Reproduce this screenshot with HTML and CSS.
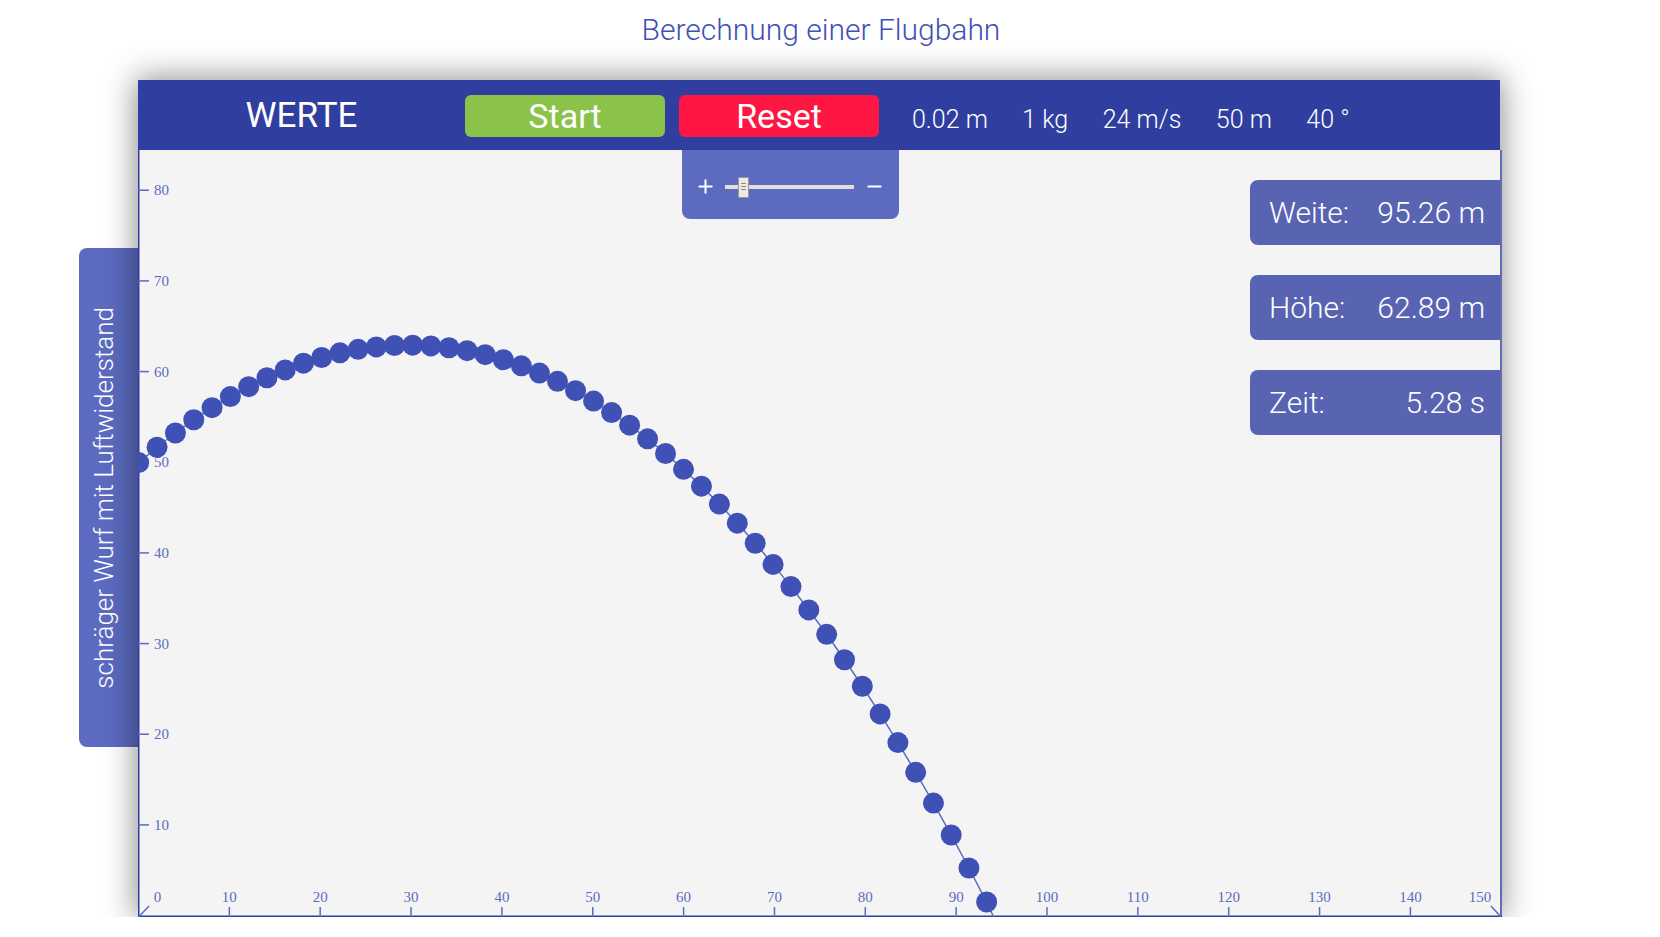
FILE: index.html
```html
<!DOCTYPE html>
<html lang="de">
<head>
<meta charset="utf-8">
<title>Berechnung einer Flugbahn</title>
<link rel="stylesheet" href="styles.css">
</head>
<body>
<div class="page">
  <h1 class="title">Berechnung einer Flugbahn</h1>

  <div class="side-tab"><span class="side-tab-label">schräger Wurf mit Luftwiderstand</span></div>

  <section class="panel">
    <header class="toolbar">
      <div class="brand">WERTE</div>
      <button class="btn btn-start" type="button">Start</button>
      <button class="btn btn-reset" type="button">Reset</button>
      <ul class="values">
        <li>0.02 m</li>
        <li>1 kg</li>
        <li>24 m/s</li>
        <li>50 m</li>
        <li>40 °</li>
      </ul>
    </header>

    <div class="chart">
      <svg class="plot" width="1364" height="767" viewBox="0 0 1364 767" xmlns="http://www.w3.org/2000/svg">
        <g class="frame">
          <line x1="0.75" y1="0" x2="0.75" y2="767"/>
          <line x1="1363" y1="0" x2="1363" y2="767"/>
          <line x1="0" y1="766.25" x2="1364" y2="766.25"/>
        </g>
        <g class="ticks">
          <line x1="0.5" y1="767" x2="11" y2="756"/>
          <line x1="91.35" y1="757" x2="91.35" y2="767"/>
          <line x1="182.2" y1="757" x2="182.2" y2="767"/>
          <line x1="273.05" y1="757" x2="273.05" y2="767"/>
          <line x1="363.9" y1="757" x2="363.9" y2="767"/>
          <line x1="454.75" y1="757" x2="454.75" y2="767"/>
          <line x1="545.6" y1="757" x2="545.6" y2="767"/>
          <line x1="636.45" y1="757" x2="636.45" y2="767"/>
          <line x1="727.3" y1="757" x2="727.3" y2="767"/>
          <line x1="818.15" y1="757" x2="818.15" y2="767"/>
          <line x1="909" y1="757" x2="909" y2="767"/>
          <line x1="999.85" y1="757" x2="999.85" y2="767"/>
          <line x1="1090.7" y1="757" x2="1090.7" y2="767"/>
          <line x1="1181.55" y1="757" x2="1181.55" y2="767"/>
          <line x1="1272.4" y1="757" x2="1272.4" y2="767"/>
          <line x1="1353" y1="756" x2="1363" y2="767"/>

          <line x1="0" y1="674.93" x2="11" y2="674.93"/>
          <line x1="0" y1="584.26" x2="11" y2="584.26"/>
          <line x1="0" y1="493.59" x2="11" y2="493.59"/>
          <line x1="0" y1="402.92" x2="11" y2="402.92"/>
          <line x1="0" y1="312.25" x2="11" y2="312.25"/>
          <line x1="0" y1="221.58" x2="11" y2="221.58"/>
          <line x1="0" y1="130.91" x2="11" y2="130.91"/>
          <line x1="0" y1="40.24" x2="11" y2="40.24"/>
        </g>
        <g class="xlabels">
          <text x="19.5" y="752">0</text>
          <text x="91.35" y="752">10</text>
          <text x="182.2" y="752">20</text>
          <text x="273.05" y="752">30</text>
          <text x="363.9" y="752">40</text>
          <text x="454.75" y="752">50</text>
          <text x="545.6" y="752">60</text>
          <text x="636.45" y="752">70</text>
          <text x="727.3" y="752">80</text>
          <text x="818.15" y="752">90</text>
          <text x="909" y="752">100</text>
          <text x="999.85" y="752">110</text>
          <text x="1090.7" y="752">120</text>
          <text x="1181.55" y="752">130</text>
          <text x="1272.4" y="752">140</text>
          <text x="1342" y="752">150</text>
        </g>
        <g class="ylabels">
          <text x="16" y="680">10</text>
          <text x="16" y="589.3">20</text>
          <text x="16" y="498.6">30</text>
          <text x="16" y="407.9">40</text>
          <text x="16" y="317.3">50</text>
          <text x="16" y="226.6">60</text>
          <text x="16" y="135.9">70</text>
          <text x="16" y="45.2">80</text>
        </g>
        <polyline class="path" points="0.7,312.6 19.06,297.26 37.41,282.99 55.75,269.79 74.07,257.67 92.38,246.62 110.67,236.64 128.95,227.74 147.21,219.92 165.46,213.16 183.7,207.48 201.92,202.87 220.13,199.34 238.33,196.88 256.51,195.49 274.68,195.18 292.83,195.94 310.97,197.78 329.1,200.68 347.21,204.66 365.3,209.72 383.39,215.85 401.46,223.05 419.51,231.33 437.55,240.68 455.58,251.1 473.6,262.6 491.59,275.17 509.58,288.81 527.55,303.53 545.51,319.32 563.45,336.18 581.38,354.12 599.3,373.14 617.2,393.22 635.09,414.38 652.96,436.61 670.82,459.92 688.67,484.3 706.5,509.75 724.32,536.28 742.12,563.88 759.91,592.56 777.69,622.3 795.45,653.12 813.2,685.02 830.93,717.99 848.65,752.03 855.6,767"/>
        <g class="dots">
          <circle cx="0.7" cy="312.6" r="10.5"/>
          <circle cx="19.06" cy="297.26" r="10.5"/>
          <circle cx="37.41" cy="282.99" r="10.5"/>
          <circle cx="55.75" cy="269.79" r="10.5"/>
          <circle cx="74.07" cy="257.67" r="10.5"/>
          <circle cx="92.38" cy="246.62" r="10.5"/>
          <circle cx="110.67" cy="236.64" r="10.5"/>
          <circle cx="128.95" cy="227.74" r="10.5"/>
          <circle cx="147.21" cy="219.92" r="10.5"/>
          <circle cx="165.46" cy="213.16" r="10.5"/>
          <circle cx="183.7" cy="207.48" r="10.5"/>
          <circle cx="201.92" cy="202.87" r="10.5"/>
          <circle cx="220.13" cy="199.34" r="10.5"/>
          <circle cx="238.33" cy="196.88" r="10.5"/>
          <circle cx="256.51" cy="195.49" r="10.5"/>
          <circle cx="274.68" cy="195.18" r="10.5"/>
          <circle cx="292.83" cy="195.94" r="10.5"/>
          <circle cx="310.97" cy="197.78" r="10.5"/>
          <circle cx="329.1" cy="200.68" r="10.5"/>
          <circle cx="347.21" cy="204.66" r="10.5"/>
          <circle cx="365.3" cy="209.72" r="10.5"/>
          <circle cx="383.39" cy="215.85" r="10.5"/>
          <circle cx="401.46" cy="223.05" r="10.5"/>
          <circle cx="419.51" cy="231.33" r="10.5"/>
          <circle cx="437.55" cy="240.68" r="10.5"/>
          <circle cx="455.58" cy="251.1" r="10.5"/>
          <circle cx="473.6" cy="262.6" r="10.5"/>
          <circle cx="491.59" cy="275.17" r="10.5"/>
          <circle cx="509.58" cy="288.81" r="10.5"/>
          <circle cx="527.55" cy="303.53" r="10.5"/>
          <circle cx="545.51" cy="319.32" r="10.5"/>
          <circle cx="563.45" cy="336.18" r="10.5"/>
          <circle cx="581.38" cy="354.12" r="10.5"/>
          <circle cx="599.3" cy="373.14" r="10.5"/>
          <circle cx="617.2" cy="393.22" r="10.5"/>
          <circle cx="635.09" cy="414.38" r="10.5"/>
          <circle cx="652.96" cy="436.61" r="10.5"/>
          <circle cx="670.82" cy="459.92" r="10.5"/>
          <circle cx="688.67" cy="484.3" r="10.5"/>
          <circle cx="706.5" cy="509.75" r="10.5"/>
          <circle cx="724.32" cy="536.28" r="10.5"/>
          <circle cx="742.12" cy="563.88" r="10.5"/>
          <circle cx="759.91" cy="592.56" r="10.5"/>
          <circle cx="777.69" cy="622.3" r="10.5"/>
          <circle cx="795.45" cy="653.12" r="10.5"/>
          <circle cx="813.2" cy="685.02" r="10.5"/>
          <circle cx="830.93" cy="717.99" r="10.5"/>
          <circle cx="848.65" cy="752.03" r="10.5"/>
        </g>
      </svg>

      <div class="zoom-box">
        <svg class="zoom-icon" width="15" height="15" viewBox="0 0 15 15"><path d="M7.5 0.5v14M0.5 7.5h14"/></svg>
        <div class="track"><span class="thumb"></span></div>
        <svg class="zoom-icon" width="15" height="15" viewBox="0 0 15 15"><path d="M0.5 7.5h14"/></svg>
      </div>

      <div class="results">
        <div class="result"><span>Weite:</span><span>95.26 m</span></div>
        <div class="result"><span>Höhe:</span><span>62.89 m</span></div>
        <div class="result"><span>Zeit:</span><span>5.28 s</span></div>
      </div>
    </div>
  </section>
</div>
</body>
</html>
```

FILE: styles.css
```css
* { box-sizing: border-box; }

html, body {
  margin: 0;
  padding: 0;
  background: #ffffff;
  overflow: hidden;
}

body {
  font-family: Roboto, "Noto Sans", "Liberation Sans", sans-serif;
}

.page {
  display: grid;
  grid-template-columns: 59px 1362px;
  grid-template-rows: 80px 837px;
  margin-left: 79px;
}

.title {
  grid-column: 2;
  grid-row: 1;
  margin: 0;
  padding: 12px 0 0 4px;
  text-align: center;
  font-size: 30px;
  line-height: 36px;
  font-weight: 300;
  color: #3f51b5;
}

.side-tab {
  grid-column: 1;
  grid-row: 2;
  align-self: start;
  margin-top: 168px;
  height: 499px;
  padding-right: 9px;
  background: #5c6bc0;
  border-radius: 8px 0 0 8px;
  display: flex;
  align-items: center;
  justify-content: center;
}

.side-tab-label {
  writing-mode: vertical-rl;
  transform: rotate(180deg);
  color: #ffffff;
  font-size: 26px;
  font-weight: 300;
  white-space: nowrap;
}

.panel {
  grid-column: 2;
  grid-row: 2;
  display: flex;
  flex-direction: column;
  box-shadow: 0 0 30px 2px rgba(0, 0, 0, 0.45);
}

.toolbar {
  height: 70px;
  flex: none;
  background: #303f9f;
  display: flex;
  align-items: center;
}

.brand {
  width: 327px;
  text-align: center;
  color: #ffffff;
  font-size: 35px;
  font-weight: 400;
}

.btn {
  width: 200px;
  height: 42px;
  margin-top: 2px;
  padding: 0;
  border: 0;
  border-radius: 6px;
  color: #ffffff;
  font-family: Roboto, "Noto Sans", sans-serif;
  font-size: 34px;
  font-weight: 400;
  line-height: 42px;
}

.btn-start { background: #8bc34a; }

.btn-reset {
  background: #ff1744;
  margin-left: 14px;
}

.values {
  display: flex;
  gap: 34.5px;
  list-style: none;
  margin: 0 0 0 33px;
  padding: 8px 0 0 0;
  color: #ffffff;
  font-size: 25px;
  font-weight: 300;
}

.chart {
  position: relative;
  flex: 1;
  width: 1364px;
  background: #f4f4f4;
  overflow: hidden;
}

.plot {
  display: block;
}

.frame line {
  stroke: #303f9f;
  stroke-width: 1.5;
}

.ticks line {
  stroke: #5c6bc0;
  stroke-width: 1.5;
}

.xlabels text,
.ylabels text {
  font-family: "Liberation Serif", "Times New Roman", serif;
  font-size: 15px;
  fill: #5c6bc0;
}

.xlabels text { text-anchor: middle; }
.ylabels text { text-anchor: start; }

.path {
  fill: none;
  stroke: #5c6bc0;
  stroke-width: 1.5;
}

.dots circle {
  fill: #3f51b5;
}

.zoom-box {
  position: absolute;
  left: 544px;
  top: 0;
  width: 217px;
  height: 69px;
  padding: 4px 0 0 16px;
  background: #5c6bc0;
  border-radius: 0 0 8px 8px;
  display: flex;
  align-items: center;
}

.zoom-icon {
  display: block;
  flex: none;
}

.zoom-icon path {
  stroke: #ffffff;
  stroke-width: 2;
  fill: none;
}

.track {
  position: relative;
  width: 129px;
  height: 4px;
  margin: 0 13px 0 12px;
  background: #e2ddd8;
}

.thumb {
  position: absolute;
  left: 13px;
  top: -8px;
  width: 11px;
  height: 21px;
  background: #ece8e4;
  border: 1.5px solid #9c9792;
  border-radius: 1px;
}

.thumb::before {
  content: "";
  position: absolute;
  left: 1.5px;
  top: 5px;
  width: 5px;
  height: 1px;
  background: #8f8a85;
  box-shadow: 0 3px 0 #8f8a85, 0 6px 0 #8f8a85;
}

.results {
  position: absolute;
  top: 30px;
  right: 2px;
  display: flex;
  flex-direction: column;
  gap: 30px;
}

.result {
  width: 250px;
  height: 65px;
  padding: 0 15px 0 19px;
  background: #5864b1;
  border-radius: 8px 0 0 8px;
  display: flex;
  align-items: center;
  justify-content: space-between;
  color: #ffffff;
  font-size: 30px;
  font-weight: 300;
}
```
